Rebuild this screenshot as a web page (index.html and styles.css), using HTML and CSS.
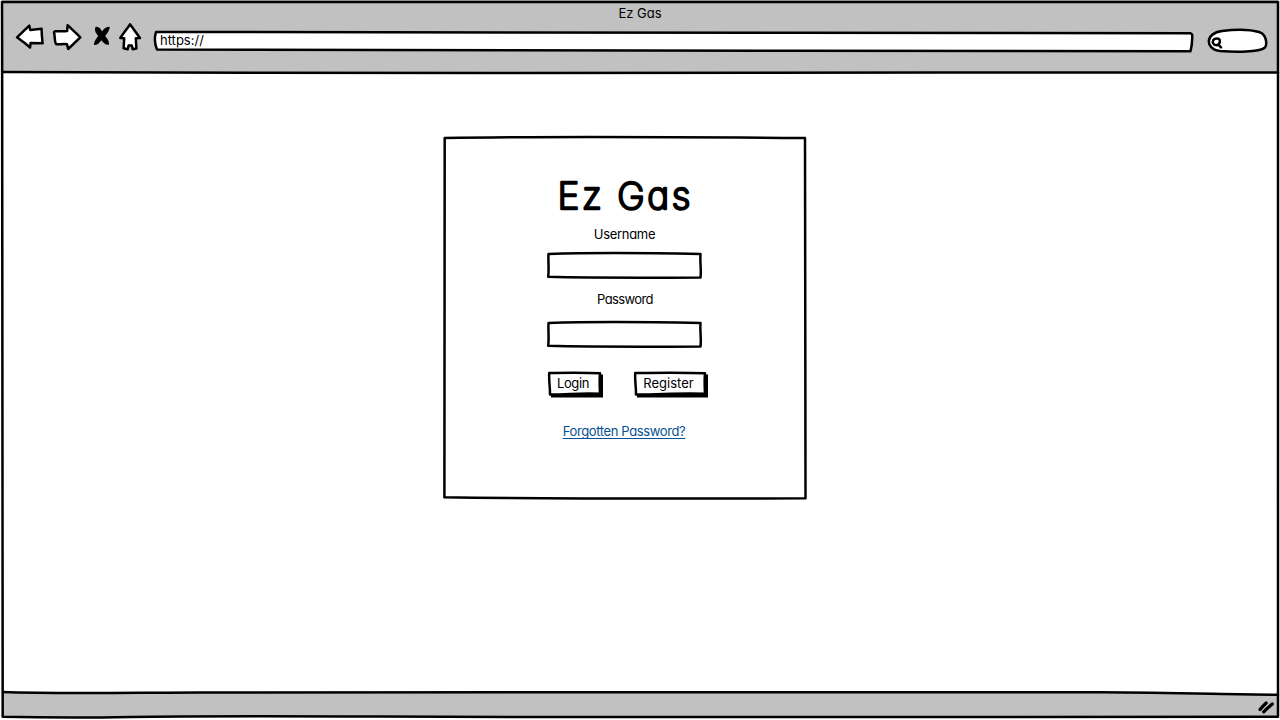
FILE: index.html
```html
<!DOCTYPE html>
<html lang="en">
<head>
<meta charset="utf-8">
<title>Ez Gas</title>
<link rel="stylesheet" href="styles.css">
</head>
<body>
<div class="browser">
  <header class="chrome">
    <div class="window-title">Ez Gas</div>
    <div class="toolbar">
      <svg class="nav-icons" width="144" height="32" viewBox="0 20 144 32">
        <path class="ink" d="M17 37.300L29.300 25.700L30.200 30L41.600 28.800C41.600 34 42 38 42.600 43.300L30.600 43L30 47.600C26 43.400 21 40.500 17 37.300Z"/>
        <path class="ink" d="M54 32.300C54 30.300 60 31.600 67.200 31L67.600 25.200C72 29.500 76 33 80.300 37.300L68.200 49L67 44.200C63 43.600 59 44.600 56.300 44.200C54.300 43 55.200 36 54 32.300Z"/>
        <path class="cross" d="M95.500 26.900C98.500 26 101 29 102 31.500C103.500 29 106 26.500 109.800 26.800C109.800 30 107.500 33 105.200 36C107.500 38.500 109.300 41.500 109 44.700C105.500 45.200 103 42.500 101.300 40.200C99.500 43 97 45.300 94 45C93.700 42 95.700 39 98.300 36C96 33.500 94 30 95.500 26.900Z"/>
        <path class="ink" d="M130 24.300C127 29 123.600 33 120.300 38L124.200 38.300L123.600 48.300L127.700 49.300L128.600 45.600L131.800 45.600L132.700 49.200L136.400 48.500L135.800 38.300L140 38C136.500 33.500 133.500 29 130 24.300Z"/>
      </svg>
      <div class="address">
        <svg class="outline" viewBox="0 0 1040 24"><path class="ink" d="M3 3C300 3 700 4 1037 4.300Q1039.800 4.500 1039.200 8C1039.300 13 1038.800 17 1037.500 22.300C700 22 300 21 4 20.500C1.200 14 1.200 9 3 3Z"/></svg>
        <span class="address-text">https://</span>
      </div>
      <svg class="search" width="62" height="28" viewBox="1206 27 62 28">
        <path class="ink" d="M1222 31C1236 29.200 1250 29.300 1260 32.300C1267 35 1267 45 1265 47.500C1259 52.500 1235 52.300 1220 51C1204.500 49 1205 33 1222 31Z"/>
        <path class="glass" d="M1213.400 39.800C1215 38 1219 38 1219.600 39.700C1220.500 42.500 1219 45 1216.500 45.200C1213 45 1212 42 1213.400 39.800M1218.700 45L1221 47.300"/>
      </svg>
    </div>
  </header>
  <main class="page">
    <section class="card">
      <svg class="outline" viewBox="0 0 364 364"><path class="line" d="M1.700 2C90 .6 250 1.200 362 2C362.600 110 362 250 362.500 362.300C240 362.600 100 362.900 1.400 361.200C1 240 2.100 120 1.700 2Z"/></svg>
      <h1 class="brand"><svg class="brand-art" width="150" height="56" viewBox="0 0 150 56"><text class="brand-text" x="7.500" y="38.500" textLength="133">Ez Gas</text></svg></h1>
      <label class="label username" for="user">Username</label>
      <div class="field">
        <svg class="outline" viewBox="0 0 156 28"><path class="line" d="M2.500 3C50 1.500 100 2 154.500 3C153.800 11 155.500 19 154.500 26.500C100 26.800 50 27 2.200 25.800C3.200 18 2 10 2.500 3Z"/></svg>
        <input id="user" class="input" type="text">
      </div>
      <label class="label password" for="pass">Password</label>
      <div class="field">
        <svg class="outline" viewBox="0 0 156 28"><path class="line" d="M2.500 3C50 1.500 100 2 154.500 3C153.800 11 155.500 19 154.500 26.500C100 26.800 50 27 2.200 25.800C3.200 18 2 10 2.500 3Z"/></svg>
        <input id="pass" class="input" type="password">
      </div>
      <div class="actions">
        <button class="button login">
          <svg class="outline" viewBox="0 0 56 27"><path class="shadow" d="M52 3.500H56V26.500H4V23Z"/><path class="ink" d="M2.200 2C20 1.700 35 1.300 53 2.300C52.300 10 52.700 16 53 22.800C35 21.600 20 23.700 3 23.500C3.200 17 1.800 10 2.200 2Z"/></svg>
          <span class="button-text">Login</span>
        </button>
        <button class="button register">
          <svg class="outline" viewBox="0 0 75 27"><path class="shadow" d="M71 3.500H75V26.500H4V23Z"/><path class="ink" d="M2.200 2C25 1.700 50 1.300 72 2.300C71.300 10 71.700 16 72 22.800C50 21.600 25 23.700 3 23.500C3.200 17 1.800 10 2.200 2Z"/></svg>
          <span class="button-text">Register</span>
        </button>
      </div>
      <a class="forgot" href="#">Forgotten Password?</a>
    </section>
  </main>
  <footer class="status">
    <svg class="outline" viewBox="0 0 1280 28"><path class="bar" d="M3 2C50 3.800 120 2.700 200 2.500C500 1.500 900 3 1100 2.300C1180 2.600 1230 4.500 1278 4.700V27H3Z"/></svg>
    <svg class="grip" width="22" height="20" viewBox="1256 698 22 20"><path d="M1260 709.500C1262 707 1264 705 1266.200 703M1263.700 711.800C1266.500 709 1269.500 706.500 1272.300 704"/></svg>
  </footer>
  <svg class="outline frame" viewBox="0 0 1280 720">
    <path class="line" d="M2 2C400 1.500 800 2.200 1278 2C1277.400 200 1278.500 500 1278 716.800C1100 718.300 900 716.500 700 717C400 717.500 250 715 130 717C80 718 40 717.600 2.700 716.800C1.300 500 2.800 250 2 2Z"/>
    <path class="line" d="M3 72C200 73.300 300 72.500 500 73C800 73.200 1000 71.600 1278 72.500M3 692C50 693.800 120 692.700 200 692.500C500 691.500 900 693 1100 692.300C1180 692.600 1230 694.500 1278 694.700"/>
  </svg>
</div>
</body>
</html>
```
FILE: styles.css
```css
* { box-sizing: border-box; }
body {
  margin: 0;
  background: #fff;
  color: #000;
  font-family: Inter, "Liberation Sans", sans-serif;
  font-size: 13px;
  line-height: 16px;
  font-feature-settings: "cv11" 1;
}
.browser { position: relative; display: flex; flex-direction: column; width: 1280px; height: 720px; overflow: hidden; }
.outline { position: absolute; inset: 0; width: 100%; height: 100%; overflow: visible; pointer-events: none; }
.ink, .line, .glass { stroke: #000; stroke-width: 2.5; stroke-linejoin: round; stroke-linecap: round; }
.ink { fill: #fff; }
.line, .glass { fill: none; }
.chrome { flex: 0 0 72px; margin: 0 2px; padding-top: 5px; background: #c1c1c1; }
.window-title { height: 15px; text-align: center; }
.toolbar { display: flex; margin-left: -2px; }
.nav-icons { flex: none; }
.address { position: relative; width: 1040px; height: 24px; margin: 9px 0 0 9px; padding: 3px 0 0 7px; }
.address-text { position: relative; }
.search { margin: 7px 0 0 13px; }
.page { flex: 1; padding: 64px 0 0 443px; }
.card { position: relative; display: flex; flex-direction: column; align-items: center; width: 364px; height: 364px; padding-top: 34px; }
.brand { height: 56px; margin: 0; line-height: 0; }
.brand-art { display: block; }
.brand-text { font-size: 37px; font-weight: 200; stroke: #000; stroke-width: 2.4; stroke-linejoin: round; }
.label { margin-right: 1px; }
.username { margin-bottom: 9px; letter-spacing: -.3px; }
.password { margin: 12px 0 13px; letter-spacing: -.6px; }
.field { position: relative; width: 156px; height: 28px; margin-right: 2px; }
.input { position: relative; width: 100%; height: 100%; padding: 4px 7px; border: 0; background: transparent; outline: 0; font: inherit; }
.actions { display: flex; gap: 30px; align-self: flex-start; margin: 23px 0 0 104px; }
.button { position: relative; height: 27px; padding: 0 4px 3px 0; border: 0; background: none; color: inherit; font: inherit; font-feature-settings: inherit; }
.shadow, .cross { fill: #000; }
.button-text { position: relative; }
.login { width: 56px; letter-spacing: -.4px; }
.register { width: 75px; }
.forgot { margin: 25px 2px 0 0; color: #045094; letter-spacing: -.38px; text-underline-offset: 2px; text-decoration-skip-ink: none; }
.status { position: relative; display: flex; justify-content: flex-end; flex: 0 0 30px; padding: 8px 2px 0; }
.status .outline { height: 28px; }
.bar { fill: #c1c1c1; }
.grip { position: relative; }
.grip path { fill: none; stroke: #000; stroke-width: 3.2; stroke-linecap: round; }
```
